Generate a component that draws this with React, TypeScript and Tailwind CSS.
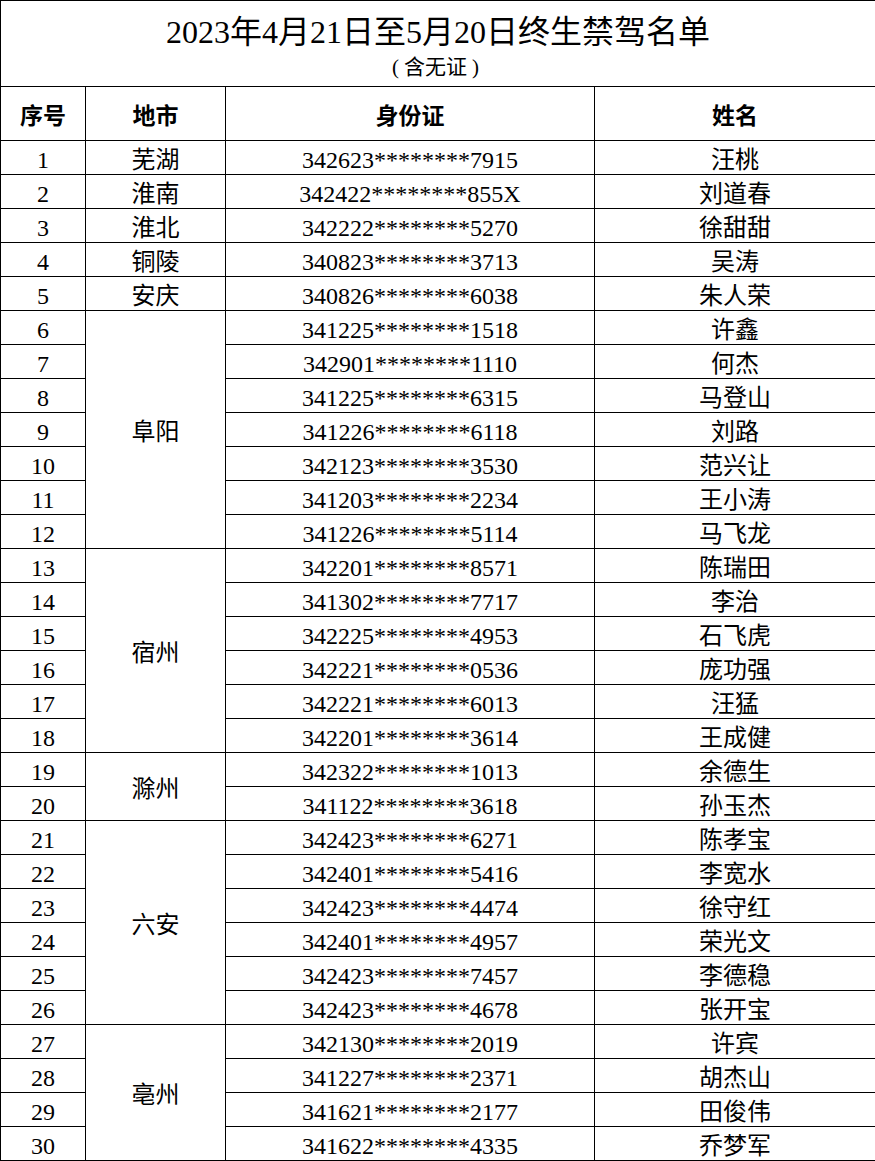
import React from "react";

type Row = { n: number; id: string; name: string };

const groups: { city: string; rows: Row[] }[] = [
  { city: "芜湖", rows: [{ n: 1, id: "342623********7915", name: "汪桃" }] },
  { city: "淮南", rows: [{ n: 2, id: "342422********855X", name: "刘道春" }] },
  { city: "淮北", rows: [{ n: 3, id: "342222********5270", name: "徐甜甜" }] },
  { city: "铜陵", rows: [{ n: 4, id: "340823********3713", name: "吴涛" }] },
  { city: "安庆", rows: [{ n: 5, id: "340826********6038", name: "朱人荣" }] },
  {
    city: "阜阳",
    rows: [
      { n: 6, id: "341225********1518", name: "许鑫" },
      { n: 7, id: "342901********1110", name: "何杰" },
      { n: 8, id: "341225********6315", name: "马登山" },
      { n: 9, id: "341226********6118", name: "刘路" },
      { n: 10, id: "342123********3530", name: "范兴让" },
      { n: 11, id: "341203********2234", name: "王小涛" },
      { n: 12, id: "341226********5114", name: "马飞龙" },
    ],
  },
  {
    city: "宿州",
    rows: [
      { n: 13, id: "342201********8571", name: "陈瑞田" },
      { n: 14, id: "341302********7717", name: "李治" },
      { n: 15, id: "342225********4953", name: "石飞虎" },
      { n: 16, id: "342221********0536", name: "庞功强" },
      { n: 17, id: "342221********6013", name: "汪猛" },
      { n: 18, id: "342201********3614", name: "王成健" },
    ],
  },
  {
    city: "滁州",
    rows: [
      { n: 19, id: "342322********1013", name: "余德生" },
      { n: 20, id: "341122********3618", name: "孙玉杰" },
    ],
  },
  {
    city: "六安",
    rows: [
      { n: 21, id: "342423********6271", name: "陈孝宝" },
      { n: 22, id: "342401********5416", name: "李宽水" },
      { n: 23, id: "342423********4474", name: "徐守红" },
      { n: 24, id: "342401********4957", name: "荣光文" },
      { n: 25, id: "342423********7457", name: "李德稳" },
      { n: 26, id: "342423********4678", name: "张开宝" },
    ],
  },
  {
    city: "亳州",
    rows: [
      { n: 27, id: "342130********2019", name: "许宾" },
      { n: 28, id: "341227********2371", name: "胡杰山" },
      { n: 29, id: "341621********2177", name: "田俊伟" },
      { n: 30, id: "341622********4335", name: "乔梦军" },
    ],
  },
];

const td = "border border-black text-center align-middle p-0 h-[34px] leading-none pt-[5px]";
const th = "border border-black text-center align-middle p-0 h-[54px] leading-none pt-[5px]";

export default function App() {
  return (
    <div className="bg-white w-[875px] h-[1161px] text-black font-['Liberation_Serif','Noto_Sans_CJK_SC',serif]">
      <table className="border-collapse table-fixed w-[875px]">
        <colgroup>
          <col className="w-[85px]" />
          <col className="w-[140px]" />
          <col className="w-[369px]" />
          <col className="w-[281px]" />
        </colgroup>
        <tbody>
          <tr>
            <td colSpan={4} className="border border-black p-0 h-[86px] align-top">
              <div className="flex flex-col items-center">
                <div className="text-[32px] leading-none mt-[15px]">2023年4月21日至5月20日终生禁驾名单</div>
                <div className="flex items-center text-[21px] leading-none mt-[9px] ml-[-5px]">
                  <span className="mr-[5px] font-['Liberation_Serif',serif]">(</span>
                  <span>含无证</span>
                  <span className="ml-[5px] font-['Liberation_Serif',serif]">)</span>
                </div>
              </div>
            </td>
          </tr>
          <tr className="text-[23px] font-bold">
            <td className={th}>序号</td>
            <td className={th}>地市</td>
            <td className={th}>身份证</td>
            <td className={th}>姓名</td>
          </tr>
          {groups.map((g) =>
            g.rows.map((r, i) => (
              <tr key={r.n} className="text-[24px]">
                <td className={td}>{r.n}</td>
                {i === 0 && (
                  <td rowSpan={g.rows.length} className="border border-black text-center align-middle p-0 leading-none pt-[5px]">
                    {g.city}
                  </td>
                )}
                <td className={td}>{r.id}</td>
                <td className={td}>{r.name}</td>
              </tr>
            ))
          )}
        </tbody>
      </table>
    </div>
  );
}
